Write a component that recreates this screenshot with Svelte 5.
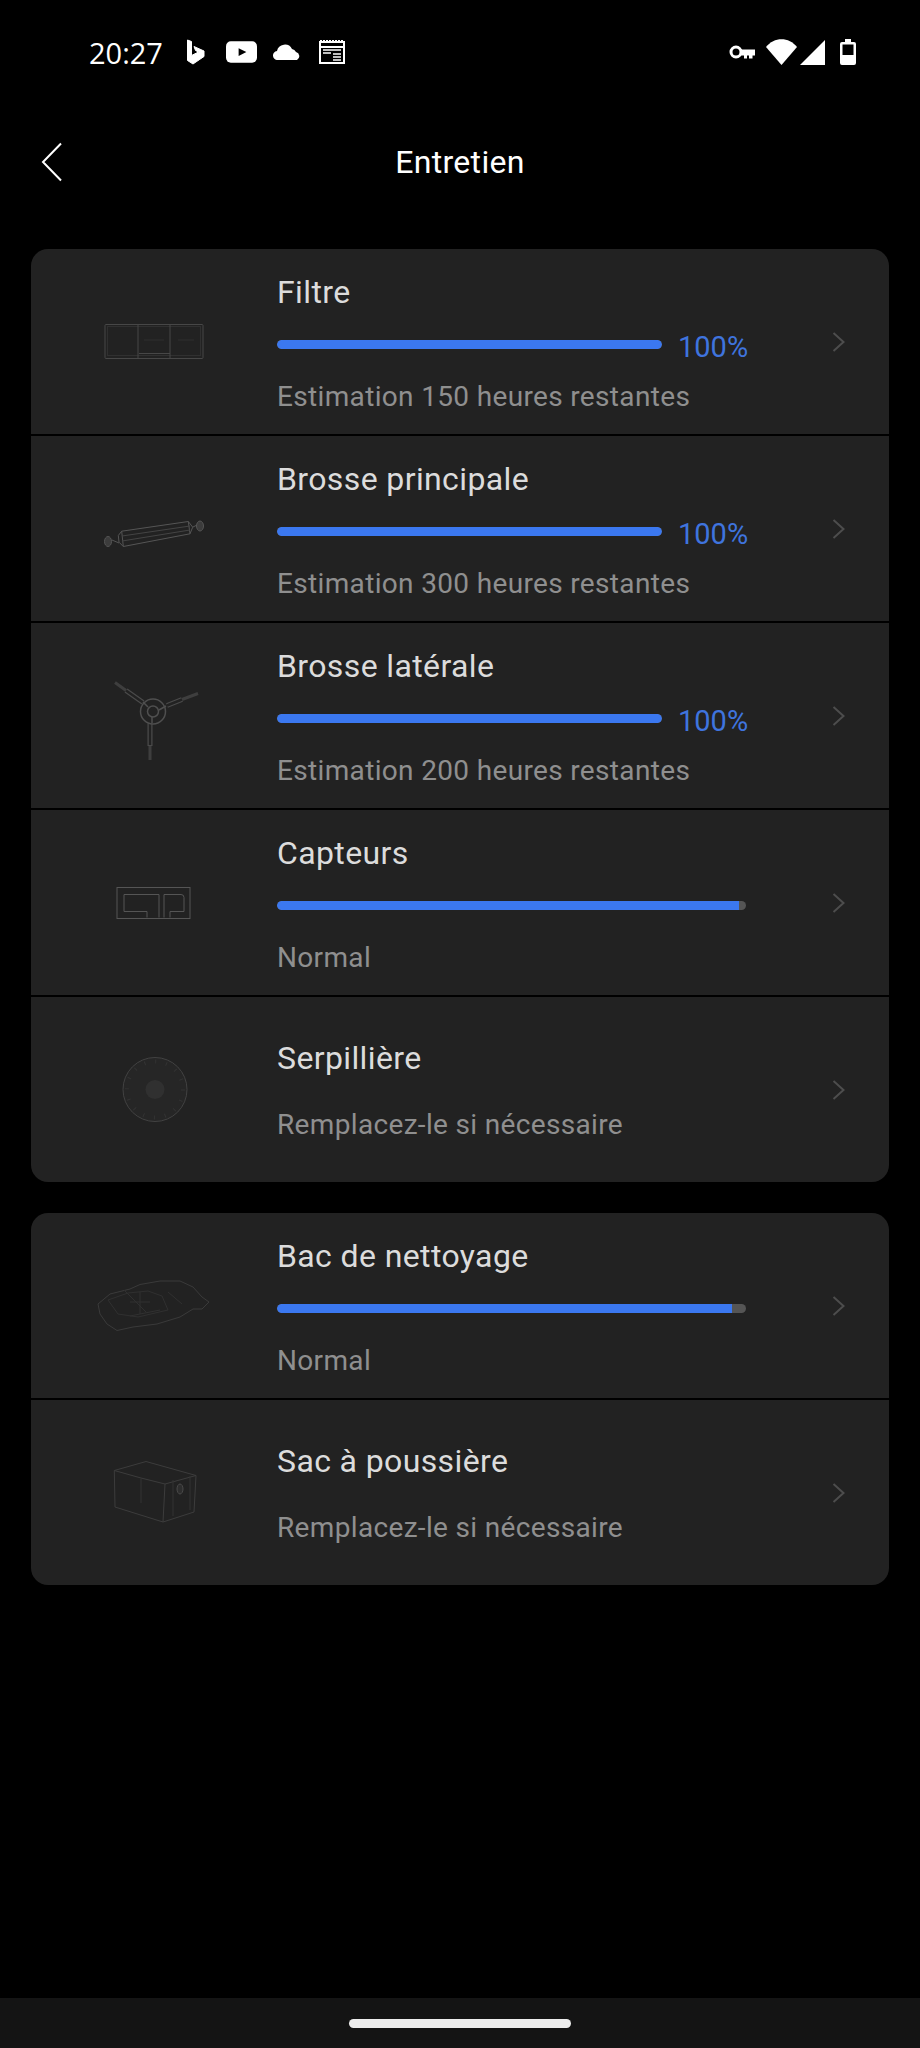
<script>
  const groups = [
    [
      { name: 'Filtre', sub: 'Estimation 150 heures restantes', pct: '100%', icon: 'filter' },
      { name: 'Brosse principale', sub: 'Estimation 300 heures restantes', pct: '100%', icon: 'brush' },
      { name: 'Brosse latérale', sub: 'Estimation 200 heures restantes', pct: '100%', icon: 'side' },
      { name: 'Capteurs', sub: 'Normal', wide: 98.5, icon: 'sensor' },
      { name: 'Serpillière', sub: 'Remplacez-le si nécessaire', icon: 'mop' }
    ],
    [
      { name: 'Bac de nettoyage', sub: 'Normal', wide: 97, icon: 'bin' },
      { name: 'Sac à poussière', sub: 'Remplacez-le si nécessaire', icon: 'bag' }
    ]
  ];
</script>

<div class="page">
  <header class="status">
    <div class="status-left">
      <span class="time">20:27</span>
      <svg class="st bing" viewBox="0 0 20 26"><path d="M1.500 1l4 1.500v14l7-3.500-3-1.500-1.500-4 10 4.500v5.500L7 25 1.500 21.500z" fill="#fff" stroke="#fff" stroke-linejoin="round"/></svg>
      <svg class="st yt" viewBox="0 0 32 22"><rect width="32" height="22" rx="5" fill="#fff"/><path d="M13 7l8 4-8 4z" fill="#000"/></svg>
      <svg class="st cloud" viewBox="0 0 28 16"><path d="M5 16a4.500 4.500 0 0 1-1-9 8 8 0 0 1 15-2 6 6 0 0 1 4 3 4.300 4.300 0 0 1 1 8z" fill="#fff"/></svg>
      <svg class="st news" viewBox="0 0 26 24"><path d="M1 2h24v21H1z" fill="none" stroke="#fff" stroke-width="2"/><path d="M1 1h24" stroke="#fff" stroke-width="2" stroke-dasharray="2 1"/><path d="M2 7h22" stroke="#fff" stroke-width="2"/><path d="M4 10h18M4 13h8M14 14h8M14 17h8M14 20h8" stroke="#fff" stroke-width="1.500"/></svg>
    </div>
    <div class="status-right">
      <svg class="st key" viewBox="0 0 26 14"><circle cx="7" cy="7" r="5" fill="none" stroke="#fff" stroke-width="3"/><path d="M12 4.500h14v6h-2.500v3h-3.500v-3h-2v3h-3v-3h-3z" fill="#fff"/></svg>
      <svg class="st wifi" viewBox="0 0 31 26"><path d="M0 8C8-2.500 23-2.500 31 8L15.500 26z" fill="#fff"/></svg>
      <svg class="st signal" viewBox="0 0 25 25"><path d="M25 0v25H0z" fill="#fff"/></svg>
      <svg class="st batt" viewBox="0 0 16 26"><path d="M5 0h6v3h3a2 2 0 0 1 2 2v19a2 2 0 0 1-2 2H2a2 2 0 0 1-2-2V5a2 2 0 0 1 2-2h3z" fill="#fff"/><rect x="2.500" y="5.500" width="11" height="10.500" fill="#000"/></svg>
    </div>
  </header>

  <nav class="nav">
    <svg class="back" viewBox="0 0 22 40"><path d="M20 1.500L2 20l18 18.500" fill="none" stroke="#fff" stroke-width="2"/></svg>
    <h1>Entretien</h1>
  </nav>

  <main class="content">
    {#each groups as group}
      <section class="card">
        {#each group as row}
          <div class="row">
            <div class="thumb">
              <svg viewBox="0 0 120 100" width="120" height="100" fill="none" stroke="#474747" stroke-width="1">
                {#if row.icon === 'filter'}
                  <rect x="11" y="32.500" width="98" height="34" rx="1"/>
                  <rect x="13.500" y="34.500" width="93" height="29" stroke="#303030"/>
                  <path d="M44 33v33M76 33v33M45 61.500h31"/>
                  <path d="M50 48h20M84 48h16" stroke="#2e2e2e"/>
                {:else if row.icon === 'brush'}
                  <ellipse cx="14" cy="62.500" rx="3.500" ry="5" fill="#3c3c3c" stroke="#555"/>
                  <path d="M18 61l7 3M24.300 56.500l3.400-4.300 66.600-9.700 4.400 5.700-2.700 6.600-66.700 12.700-4.300-4.300zM27.700 52.200l1.600 15.300M94.300 42.500l1.700 12.300" stroke="#555"/>
                  <path d="M28 57l68-10M28 62l68-11" stroke="#444"/>
                  <path d="M99 48l4-2" stroke="#555"/>
                  <ellipse cx="106" cy="47" rx="3.500" ry="5" fill="#3c3c3c" stroke="#555"/>
                {:else if row.icon === 'side'}
                  <path d="M49 36.500L32 24.500M73 39.500L88 33.500M56 57.500V80" stroke="#4a4a4a" stroke-width="5"/>
                  <path d="M49 36.500L32 24.500M73 39.500L88 33.500M56 57.500V79" stroke="#222" stroke-width="2.500"/>
                  <path d="M32 24.500L21 16.500M88 33.500L104 27.500M56 80V94" stroke="#3e3e3e" stroke-width="3"/>
                  <circle cx="59" cy="45.500" r="12.500" fill="#222" stroke="#4f4f4f" stroke-width="1.500"/>
                  <circle cx="59" cy="45.500" r="5.500" stroke="#4f4f4f" stroke-width="1.500"/>
                  <path d="M54 41l-5-5M65 44l7-4M58 51v6" stroke="#4f4f4f" stroke-width="1.500"/>
                {:else if row.icon === 'sensor'}
                  <rect x="23" y="34.500" width="73" height="31" stroke="#555"/>
                  <path d="M30 41.500h35v23M30 41.500v17h23v6M70 64.500v-23h17a3 3 0 0 1 3 3v14H76v6" stroke="#555"/>
                {:else if row.icon === 'mop'}
                  <circle cx="61" cy="49.500" r="32" fill="#262626" stroke="#424242"/>
                  <circle cx="61" cy="49.500" r="28" stroke="#333" stroke-width="4" stroke-dasharray="1 10"/>
                  <circle cx="61" cy="49.500" r="9.500" fill="#303030" stroke="none"/>
                {:else if row.icon === 'bin'}
                  <path d="M4 48l12-10 20-5 10-4.500 20-3.500h20l13 6 9 10 7 5-7 7h-9l-13 8-23 7-24 3-16 3.500-10-6.500-7-10z" stroke="#3a3a3a" stroke-linejoin="round"/>
                  <path d="M14 44l20-7 20-2 14 5 6 14-30 7-20-3z" stroke="#303030"/>
                  <path d="M46 36v22M36 46h20M36 60l30-6M30 34l22 22M74 36l14 12" stroke="#303030"/>
                {:else if row.icon === 'bag'}
                  <path d="M20.300 27.500L52 18.500l50 14-2 36.500-31 10-48-15zM20.300 27.500L47 35l24 6 31-8.500M71 41l-2 38" stroke="#3c3c3c"/>
                  <path d="M79 37v36M96 33v34M47 36v24" stroke="#333"/>
                  <ellipse cx="86" cy="46" rx="3" ry="5" stroke="#4a4a4a" fill="#2e2e2e"/>
                {/if}
              </svg>
            </div>
            <div class="info" class:nobar={!row.pct && !row.wide}>
              <div class="name">{row.name}</div>
              {#if row.pct}
                <div class="barline">
                  <div class="track short"><div class="fill full"></div></div>
                  <span class="pct">{row.pct}</span>
                </div>
              {:else if row.wide}
                <div class="barline">
                  <div class="track long"><div class="fill" style="width:{row.wide}%"></div></div>
                </div>
              {/if}
              <div class="sub">{row.sub}</div>
            </div>
            <svg class="chev" viewBox="0 0 14 20"><path d="M1.500 1l10 9-10 9" fill="none" stroke="#4d4d4d" stroke-width="2"/></svg>
          </div>
        {/each}
      </section>
    {/each}
  </main>

  <footer class="navbar"><div class="handle"></div></footer>
</div>

<style>
  :global(body) { margin: 0; background: #000; }
  .page {
    height: 2048px;
    background: #000;
    display: flex;
    flex-direction: column;
    font-family: Roboto, "Noto Sans", sans-serif;
    overflow: hidden;
  }
  .status {
    height: 104px;
    box-sizing: border-box;
    padding: 0 64px 0 89px;
    display: flex;
    justify-content: space-between;
    align-items: center;
    flex: none;
  }
  .status-left, .status-right { display: flex; align-items: center; }
  .time { color: #fff; font-size: 29px; font-family: "Open Sans", Roboto, sans-serif; font-weight: 500; margin-right: 23px; }
  .st { display: block; flex: none; }
  .bing { width: 20px; height: 26px; margin-right: 20px; }
  .yt { width: 31px; height: 22px; margin-right: 16px; }
  .cloud { width: 28px; height: 16px; margin-right: 18px; }
  .news { width: 26px; height: 24px; }
  .key { width: 26px; height: 14px; margin-right: 11px; }
  .wifi { width: 31px; height: 26px; margin-right: 3px; }
  .signal { width: 25px; height: 25px; margin-right: 15px; }
  .batt { width: 16px; height: 26px; }
  .nav {
    height: 116px;
    flex: none;
    position: relative;
    display: flex;
    align-items: center;
    justify-content: center;
  }
  .back { position: absolute; left: 41px; top: 38px; width: 22px; height: 40px; }
  h1 { margin: 0; color: #fff; font-size: 32px; letter-spacing: 0.3px; font-weight: 400; }
  .content {
    flex: 1;
    padding: 29px 31px 0;
    display: flex;
    flex-direction: column;
    gap: 31px;
  }
  .card {
    background: #000;
    border-radius: 17px;
    display: flex;
    flex-direction: column;
    gap: 2px;
    overflow: hidden;
  }
  .row {
    height: 185px;
    background: #222;
    display: flex;
    align-items: center;
    position: relative;
  }
  .thumb { width: 246px; flex: none; display: flex; justify-content: center; align-items: center; }
  .thumb svg { display: block; }
  .info { width: 470px; flex: none; display: flex; flex-direction: column; padding-top: 5px; box-sizing: border-box; }
  .name { color: #dcdcdc; font-size: 32px; letter-spacing: 0.38px; line-height: 36px; margin-top: -1px; }
  .barline { display: flex; align-items: center; height: 9px; margin-top: 30px; }
  .track { height: 9px; border-radius: 5px; background: #555; flex: none; overflow: hidden; }
  .track.short { width: 385px; }
  .track.long { width: 469px; }
  .fill { height: 100%; background: #3b78f0; border-radius: 5px 0 0 5px; }
  .fill.full { width: 100%; border-radius: 5px; }
  .pct { color: #3f74de; font-size: 29px; margin: 5px 0 0 16px; white-space: nowrap; line-height: 9px; }
  .sub { color: #8f8f8f; font-size: 28px; letter-spacing: 0.34px; line-height: 32px; margin-top: 32px; }
  .nobar { padding-top: 3px; }
  .nobar .sub { margin-top: 33px; }
  .chev { position: absolute; left: 801px; top: 83px; width: 14px; height: 20px; }
  .navbar {
    height: 50px;
    flex: none;
    background: #141414;
    display: flex;
    justify-content: center;
    padding-top: 21px;
    box-sizing: border-box;
  }
  .handle { width: 222px; height: 9px; background: #ececec; border-radius: 5px; }
</style>
